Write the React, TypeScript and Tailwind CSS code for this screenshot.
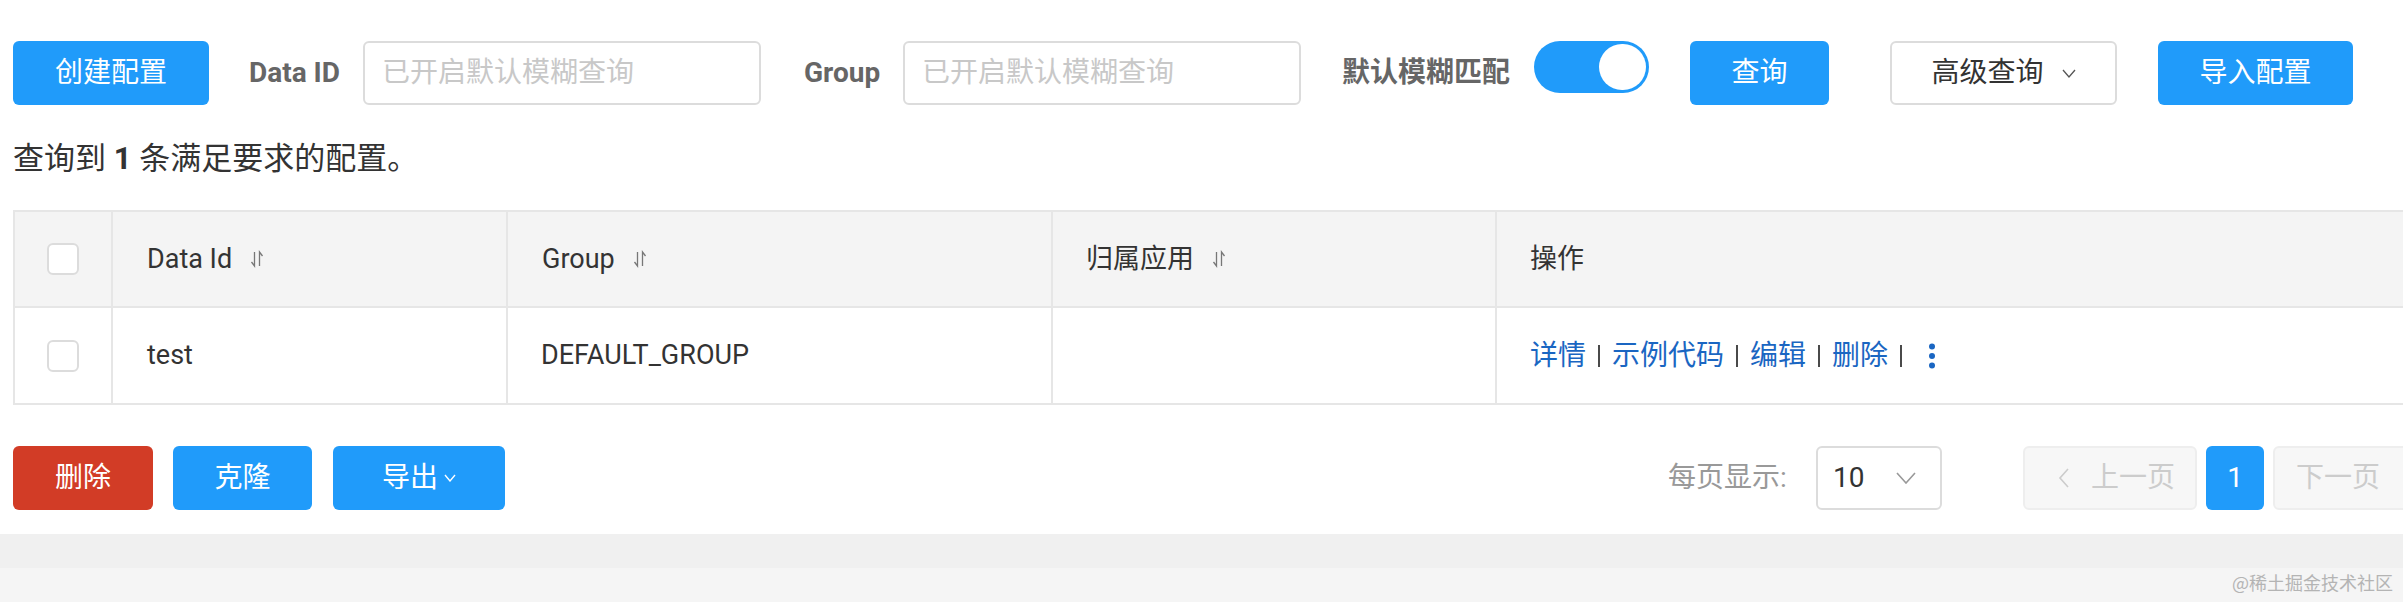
import React from "react";

const font = { fontFamily: 'Roboto, "Noto Sans CJK SC", sans-serif' };

function SortIcon() {
  return (
    <svg width="14" height="20" viewBox="0 0 14 20" className="ml-[18px] shrink-0">
      <path d="M4.5 3 V17 L1.5 13" stroke="#777" strokeWidth="1.3" fill="none" />
      <path d="M9.5 17 V3 L12.5 7" stroke="#777" strokeWidth="1.3" fill="none" />
    </svg>
  );
}

function Chevron({ w = 12, h = 8, color = "#666", sw = 1.4 }: { w?: number; h?: number; color?: string; sw?: number }) {
  return (
    <svg width={w} height={h} viewBox={`0 0 ${w} ${h}`} className="shrink-0">
      <path d={`M1 1 L${w / 2} ${h - 1} L${w - 1} 1`} stroke={color} strokeWidth={sw} fill="none" />
    </svg>
  );
}

function Checkbox() {
  return <div className="w-[32px] h-[32px] rounded-[6px] border-2 border-[#dcdcdc] bg-white" />;
}

function Sep() {
  return <span className="w-[2px] h-[22px] bg-[#4a4a4a] shrink-0" />;
}

export default function App() {
  return (
    <div className="relative w-[2403px] h-[602px] overflow-hidden bg-white text-[#333]" style={font}>
      {/* top row */}
      <div className="flex items-start pt-[41px] text-[28px] leading-none">
        <button className="shrink-0 ml-[13px] w-[196px] h-[64px] rounded-[6px] bg-[#209bfa] text-white text-[28px]">创建配置</button>
        <span className="shrink-0 ml-[40px] w-[90px] h-[64px] flex items-center font-bold text-[#666] whitespace-nowrap">Data ID</span>
        <div className="shrink-0 ml-[24px] w-[398px] h-[64px] rounded-[6px] border-2 border-[#dcdcdc] flex items-center pl-[17px] text-[#c8c8c8] whitespace-nowrap">
          已开启默认模糊查询
        </div>
        <span className="shrink-0 ml-[43px] w-[74px] h-[64px] flex items-center font-bold text-[#666]">Group</span>
        <div className="shrink-0 ml-[25px] w-[398px] h-[64px] rounded-[6px] border-2 border-[#dcdcdc] flex items-center pl-[17px] text-[#c8c8c8] whitespace-nowrap">
          已开启默认模糊查询
        </div>
        <span className="shrink-0 ml-[41px] w-[168px] h-[64px] flex items-center font-bold text-[#666] whitespace-nowrap">默认模糊匹配</span>
        <div className="shrink-0 ml-[24px] w-[115px] h-[52px] rounded-full bg-[#209bfa] flex items-center justify-end pr-[3px]">
          <div className="w-[47px] h-[46px] rounded-full bg-white" />
        </div>
        <button className="shrink-0 ml-[41px] w-[139px] h-[64px] rounded-[6px] bg-[#209bfa] text-white text-[28px]">查询</button>
        <button className="shrink-0 ml-[61px] w-[227px] h-[64px] rounded-[6px] border-2 border-[#dcdcdc] bg-white text-[#333] text-[28px] flex items-center justify-center gap-[18px]">
          <span>高级查询</span>
          <Chevron w={14} h={9} color="#555" sw={1.3} />
        </button>
        <button className="shrink-0 ml-[41px] w-[195px] h-[64px] rounded-[6px] bg-[#209bfa] text-white text-[28px]">导入配置</button>
      </div>

      {/* summary */}
      <div className="ml-[13px] mt-[34px] h-[40px] flex items-center text-[31px] text-[#333] whitespace-nowrap">
        查询到&nbsp;<b className="font-bold">1</b>&nbsp;条满足要求的配置。
      </div>

      {/* table */}
      <div className="ml-[13px] mt-[31px] w-[2500px] border-2 border-[#e6e6e6] text-[27px] text-[#333]">
        <div className="flex h-[96px] bg-[#f4f4f4] border-b-2 border-[#e6e6e6]">
          <div className="shrink-0 w-[98px] border-r-2 border-[#e6e6e6] flex items-center justify-center">
            <Checkbox />
          </div>
          <div className="shrink-0 w-[395px] border-r-2 border-[#e6e6e6] flex items-center pl-[34px]">
            <span>Data Id</span>
            <SortIcon />
          </div>
          <div className="shrink-0 w-[545px] border-r-2 border-[#e6e6e6] flex items-center pl-[34px]">
            <span>Group</span>
            <SortIcon />
          </div>
          <div className="shrink-0 w-[444px] border-r-2 border-[#e6e6e6] flex items-center pl-[33px]">
            <span>归属应用</span>
            <SortIcon />
          </div>
          <div className="flex-1 flex items-center pl-[33px]">
            <span>操作</span>
          </div>
        </div>
        <div className="flex h-[95px] bg-white">
          <div className="shrink-0 w-[98px] border-r-2 border-[#e6e6e6] flex items-center justify-center">
            <Checkbox />
          </div>
          <div className="shrink-0 w-[395px] border-r-2 border-[#e6e6e6] flex items-center pl-[34px]">test</div>
          <div className="shrink-0 w-[545px] border-r-2 border-[#e6e6e6] flex items-center pl-[33px]">DEFAULT_GROUP</div>
          <div className="shrink-0 w-[444px] border-r-2 border-[#e6e6e6]" />
          <div className="flex-1 flex items-center pl-[33px] text-[28px] text-[#1a66c2] gap-[12px] whitespace-nowrap">
            <span>详情</span>
            <Sep />
            <span>示例代码</span>
            <Sep />
            <span>编辑</span>
            <Sep />
            <span>删除</span>
            <Sep />
            <svg width="8" height="28" viewBox="0 0 8 28" className="ml-[14px] shrink-0">
              <circle cx="4" cy="4.5" r="3" fill="#1a66c2" />
              <circle cx="4" cy="14" r="3" fill="#1a66c2" />
              <circle cx="4" cy="23.5" r="3" fill="#1a66c2" />
            </svg>
          </div>
        </div>
      </div>

      {/* bottom row */}
      <div className="mt-[41px] h-[64px] flex items-center text-[28px]">
        <button className="shrink-0 ml-[13px] w-[140px] h-[64px] rounded-[6px] bg-[#d23c26] text-white">删除</button>
        <button className="shrink-0 ml-[20px] w-[139px] h-[64px] rounded-[6px] bg-[#209bfa] text-white">克隆</button>
        <button className="shrink-0 ml-[21px] w-[172px] h-[64px] rounded-[6px] bg-[#209bfa] text-white flex items-center justify-center gap-[6px]">
          <span>导出</span>
          <Chevron w={12} h={8} color="#fff" sw={1.4} />
        </button>
        <span className="shrink-0 ml-[1163px] w-[125px] text-[#999] whitespace-nowrap">每页显示:</span>
        <div className="shrink-0 ml-[23px] w-[126px] h-[64px] rounded-[6px] border-2 border-[#dcdcdc] flex items-center pl-[15px] pr-[24px] justify-between text-[#333]">
          <span>10</span>
          <Chevron w={20} h={12} color="#999" sw={1.6} />
        </div>
        <div className="shrink-0 ml-[81px] w-[174px] h-[64px] rounded-[6px] border-2 border-[#eeeeee] bg-[#f7f7f7] flex items-center pl-[33px] text-[#cccccc] whitespace-nowrap">
          <svg width="12" height="22" viewBox="0 0 12 22" className="shrink-0">
            <path d="M10 2 L2 11 L10 20" stroke="#cccccc" strokeWidth="1.6" fill="none" />
          </svg>
          <span className="ml-[21px]">上一页</span>
        </div>
        <div className="shrink-0 ml-[9px] w-[58px] h-[64px] rounded-[6px] bg-[#209bfa] text-white flex items-center justify-center">1</div>
        <div className="shrink-0 ml-[9px] w-[174px] h-[64px] rounded-[6px] border-2 border-[#eeeeee] bg-[#f7f7f7] flex items-center pl-[21px] text-[#cccccc] whitespace-nowrap">
          <span>下一页</span>
          <svg width="12" height="22" viewBox="0 0 12 22" className="ml-[34px] shrink-0">
            <path d="M2 2 L10 11 L2 20" stroke="#cccccc" strokeWidth="1.6" fill="none" />
          </svg>
        </div>
      </div>

      {/* footer strips */}
      <div className="mt-[24px] h-[34px] bg-[#f0f0f0]" />
      <div className="h-[40px] bg-[#f5f5f5]" />

      <div
        className="absolute right-[10px] bottom-[6px] text-[18px] text-[#b4b4b4] whitespace-nowrap"
        style={{ fontFamily: '"Noto Sans CJK SC", sans-serif' }}
      >
        @稀土掘金技术社区
      </div>
    </div>
  );
}
